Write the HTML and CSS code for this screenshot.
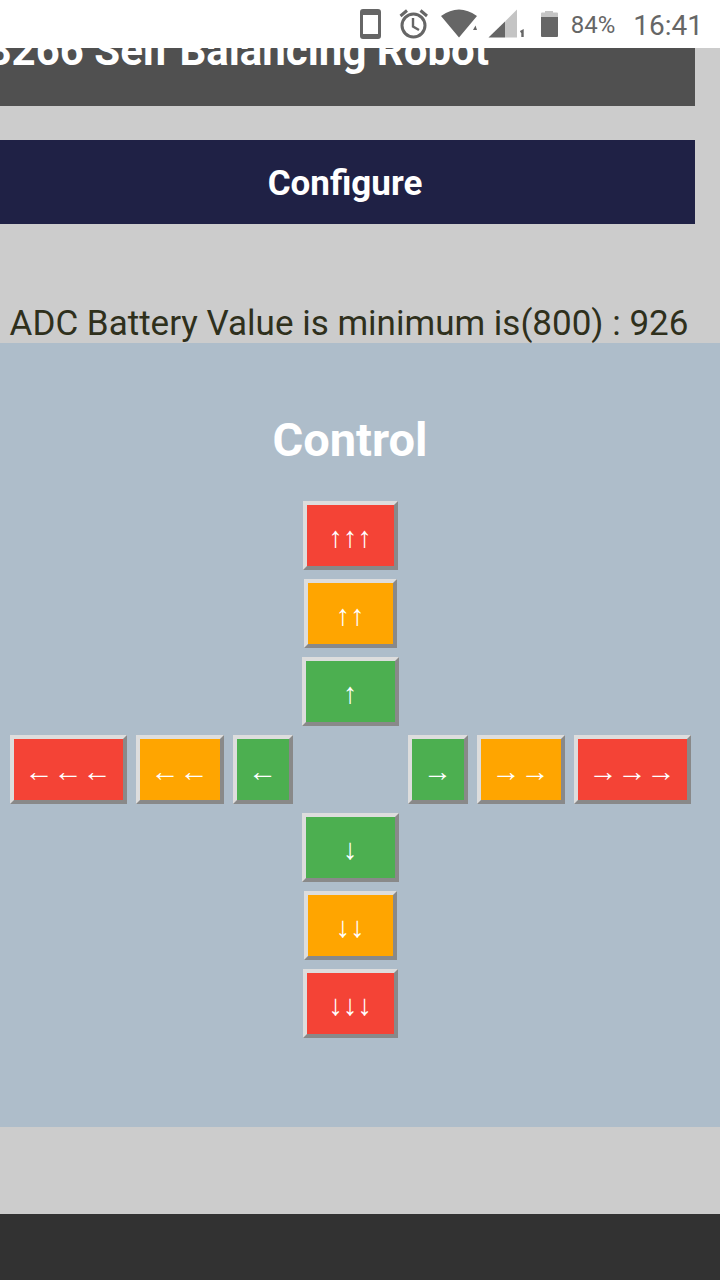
FILE: index.html
```html
<!DOCTYPE html>
<html lang="en">
<head>
<meta charset="utf-8">
<meta name="viewport" content="width=device-width, initial-scale=1">
<title>Self Balancing Robot</title>
<link rel="stylesheet" href="styles.css">
</head>
<body>
<div class="status">
  <svg class="status-icons" width="222" height="48" viewBox="340 0 222 48" aria-hidden="true">
    <path fill="#666" fill-rule="evenodd" d="M363 9h15a3 3 0 0 1 3 3v24a3 3 0 0 1-3 3h-15a3 3 0 0 1-3-3V12a3 3 0 0 1 3-3zM363 15v19h15V15z"/>
    <g fill="none" stroke="#666">
      <circle cx="413.500" cy="25.500" r="11.500" stroke-width="3"/>
      <path stroke-width="2.400" d="M413 18v8.500l6 3.500"/>
      <path stroke-width="3" d="M400.500 16l6.500-5.500M427 16l-6.500-5.500"/>
    </g>
    <path fill="#666" d="M441 16q18-13 36 0L459 37.500zM473 30l2.500-4.500 1.500 4.500z"/>
    <path fill="#c4c4c4" d="M505 21.500L517 9.500v28h-12z"/>
    <path fill="#666" d="M488.500 37.500L505 21.500v16z"/>
    <path fill="none" stroke="#666" stroke-width="2.400" d="M520.500 32l2-1v6"/>
    <path fill="#c4c4c4" d="M541 17v-3.500q0-1 1-1h3V11h8v1.500h4q1 0 1 1V17z"/>
    <path fill="#666" d="M541 17h17v19q0 1-1 1h-15q-1 0-1-1z"/>
  </svg>
  <span class="battery">84%</span>
  <time class="clock">16:41</time>
</div>
<main>
  <header class="banner"><h1>8266 Self Balancing Robot</h1></header>
  <button class="configure" type="button">Configure</button>
  <p class="adc">ADC Battery Value is minimum is(800) : 926</p>
  <section class="panel">
    <h2>Control</h2>
    <div class="pad">
      <button type="button" class="key tall red">↑↑↑</button>
      <button type="button" class="key tall orange">↑↑</button>
      <button type="button" class="key tall green">↑</button>
      <div class="row">
        <button type="button" class="key red">←←←</button>
        <button type="button" class="key orange">←←</button>
        <button type="button" class="key green">←</button>
        <span class="hub"></span>
        <button type="button" class="key green">→</button>
        <button type="button" class="key orange">→→</button>
        <button type="button" class="key red">→→→</button>
      </div>
      <button type="button" class="key tall green">↓</button>
      <button type="button" class="key tall orange">↓↓</button>
      <button type="button" class="key tall red">↓↓↓</button>
    </div>
  </section>
</main>
<footer class="navbar"></footer>
</body>
</html>
```
FILE: styles.css
```css
* { box-sizing: border-box; }
body {
  margin: 0;
  min-height: 100vh;
  display: flex;
  flex-direction: column;
  background: #ccc;
  font-family: Roboto, sans-serif;
}
h1, h2, p { margin: 0; }
.status {
  display: flex;
  align-items: center;
  justify-content: flex-end;
  height: 48px;
  padding: 2px 17px 0 0;
  background: #fff;
  color: #666;
}
.status-icons { flex: none; margin-top: -2px; }
.battery { margin-left: 9px; font-size: 24px; }
.clock { margin-left: 18px; font-size: 28px; }
main { flex: 1; display: flex; flex-direction: column; }
.banner {
  display: flex;
  justify-content: flex-end;
  height: 58px;
  margin-right: 25px;
  padding-right: 206px;
  overflow: hidden;
  background: #505050;
  color: #fff;
}
.banner h1 { margin-top: -21px; font-size: 42px; line-height: 48px; white-space: nowrap; }
.configure {
  height: 84px;
  margin: 34px 25px 0 -5px;
  padding: 2px 0 0;
  border: 0;
  background: #1f2145;
  color: #fff;
  font: bold 35px Roboto, sans-serif;
}
.adc {
  margin-top: 80px;
  padding-right: 22px;
  color: #2f301c;
  font-size: 35px;
  line-height: 39px;
  text-align: center;
  white-space: nowrap;
}
.panel {
  padding: 68px 20px 89px 0;
  background: #aebdca;
}
.panel h2 {
  color: #fff;
  font-size: 47px;
  line-height: 58px;
  text-align: center;
}
.pad {
  display: flex;
  flex-direction: column;
  align-items: center;
  gap: 9px;
  margin-top: 32px;
}
.row { display: flex; gap: 9px; }
.hub { width: 97px; }
.key {
  height: 69px;
  min-width: 60px;
  padding: 3px 11px 0;
  border: 4px outset #ddd;
  color: #fff;
  font-family: "Liberation Serif", serif;
  font-size: 29px;
}
.red { background: #f44336; }
.orange { background: #ffa500; }
.green { background: #4caf50; }
.tall { width: 95px; }
.tall.green { width: 97px; }
.tall.orange { width: 93px; }
.navbar { height: 66px; background: #323232; }
```
